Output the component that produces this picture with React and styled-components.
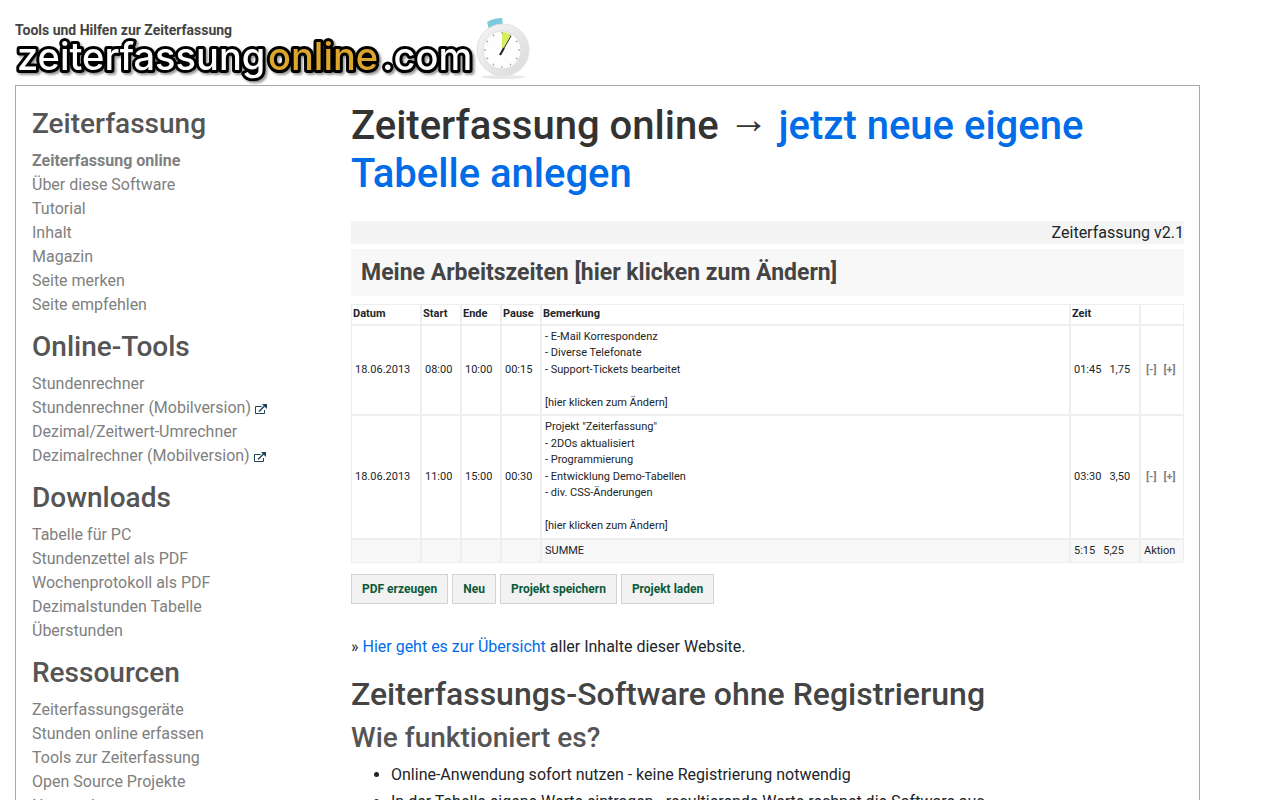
import React from 'react'
import styled, { createGlobalStyle } from 'styled-components'

const menu = [
    {
        title: 'Zeiterfassung',
        links: [
            { text: 'Zeiterfassung online', active: true },
            { text: 'Über diese Software' },
            { text: 'Tutorial' },
            { text: 'Inhalt' },
            { text: 'Magazin' },
            { text: 'Seite merken' },
            { text: 'Seite empfehlen' },
        ],
    },
    {
        title: 'Online-Tools',
        links: [
            { text: 'Stundenrechner' },
            { text: 'Stundenrechner (Mobilversion)', external: true },
            { text: 'Dezimal/Zeitwert-Umrechner' },
            { text: 'Dezimalrechner (Mobilversion)', external: true },
        ],
    },
    {
        title: 'Downloads',
        links: [
            { text: 'Tabelle für PC' },
            { text: 'Stundenzettel als PDF' },
            { text: 'Wochenprotokoll als PDF' },
            { text: 'Dezimalstunden Tabelle' },
            { text: 'Überstunden' },
        ],
    },
    {
        title: 'Ressourcen',
        links: [
            { text: 'Zeiterfassungsgeräte' },
            { text: 'Stunden online erfassen' },
            { text: 'Tools zur Zeiterfassung' },
            { text: 'Open Source Projekte' },
            { text: 'Netzwerk' },
        ],
    },
]

const rows = [
    {
        id: 1,
        date: '18.06.2013',
        start: '08:00',
        end: '10:00',
        pause: '00:15',
        note: '- E-Mail Korrespondenz\n- Diverse Telefonate\n- Support-Tickets bearbeitet\n\n[hier klicken zum Ändern]',
        time: '01:45',
        decimal: '1,75',
    },
    {
        id: 2,
        date: '18.06.2013',
        start: '11:00',
        end: '15:00',
        pause: '00:30',
        note: 'Projekt "Zeiterfassung"\n- 2DOs aktualisiert\n- Programmierung\n- Entwicklung Demo-Tabellen\n- div. CSS-Änderungen\n\n[hier klicken zum Ändern]',
        time: '03:30',
        decimal: '3,50',
    },
]

const actions = ['PDF erzeugen', 'Neu', 'Projekt speichern', 'Projekt laden']

function Logo() {
    const ticks = Array.from({ length: 12 }, (_, i) => i * 30)
    return (
        <LogoSvg width="520" height="66" viewBox="0 0 520 66" role="img" aria-label="zeiterfassungonline.com">
            <defs>
                <linearGradient id="case" x1="0" y1="0" x2="1" y2="1">
                    <stop offset="0" stopColor="#f6f6f6" />
                    <stop offset="1" stopColor="#dadada" />
                </linearGradient>
            </defs>
            <g className="word">
                <text x="2" y="55">zeiterfassung</text>
                <text x="253" y="55" className="gold">online</text>
                <text x="367" y="55">.com</text>
            </g>
            {/* stopwatch */}
            <ellipse cx="488" cy="62" rx="22" ry="2" fill="#e8e8e8" />
            <path d="M472 7 Q479 3 487 3 L488 10 L474 14 Z" fill="#7cc8dc" />
            <circle cx="488" cy="35" r="26" fill="url(#case)" stroke="#e2e2e2" />
            <circle cx="487" cy="35" r="19" fill="#fefefe" stroke="#dedede" />
            <path d="M487 35 V17 Q492 17 496 20 Z" fill="#d6ee5c" />
            {ticks.map((deg) => (
                <path key={deg} d="M487 17 v2" stroke="#999" transform={`rotate(${deg} 487 35)`} />
            ))}
            <path d="M485 40 L496 21" stroke="#222" strokeWidth="1" />
            <path d="M485 40 L489 33" stroke="#222" strokeWidth="2" />
        </LogoSvg>
    )
}

function ExternalIcon() {
    return (
        <svg width="13" height="11" viewBox="0 0 13 11" fill="none" stroke="#1f4257" aria-hidden="true">
            <path d="M6.5 2.5 H0.5 V9.5 H9.5 V6" />
            <path d="M4 7.5 L10 1.5" strokeWidth="1.4" />
            <path d="M7 0 H12 V5 Z" fill="#1f4257" stroke="none" />
        </svg>
    )
}

function Sidebar() {
    return (
        <SidebarStyled>
            {menu.map((group) => (
                <section key={group.title}>
                    <h3>{group.title}</h3>
                    <ul>
                        {group.links.map((link) => (
                            <li key={link.text}>
                                <MenuLink href="#" $active={link.active}>
                                    {link.text}
                                    {link.external && <ExternalIcon />}
                                </MenuLink>
                            </li>
                        ))}
                    </ul>
                </section>
            ))}
        </SidebarStyled>
    )
}

function TimeTable() {
    return (
        <TableStyled>
            <colgroup>
                <col width="70" />
                <col width="40" />
                <col width="40" />
                <col width="40" />
                <col />
                <col width="70" />
                <col width="44" />
            </colgroup>
            <thead>
                <tr>
                    <th>Datum</th>
                    <th>Start</th>
                    <th>Ende</th>
                    <th>Pause</th>
                    <th>Bemerkung</th>
                    <th>Zeit</th>
                    <th></th>
                </tr>
            </thead>
            <tbody>
                {rows.map((row) => (
                    <tr key={row.id}>
                        <td>{row.date}</td>
                        <td>{row.start}</td>
                        <td>{row.end}</td>
                        <td>{row.pause}</td>
                        <td>{row.note}</td>
                        <td><Times><span>{row.time}</span><span>{row.decimal}</span></Times></td>
                        <td>
                            <RowTools>
                                <button type="button" aria-label="Zeile löschen">[-]</button>
                                <button type="button" aria-label="Zeile hinzufügen">[+]</button>
                            </RowTools>
                        </td>
                    </tr>
                ))}
            </tbody>
            <tfoot>
                <tr>
                    <td></td>
                    <td></td>
                    <td></td>
                    <td></td>
                    <td>SUMME</td>
                    <td><Times><span>5:15</span><span>5,25</span></Times></td>
                    <td>Aktion</td>
                </tr>
            </tfoot>
        </TableStyled>
    )
}

function App() {
    return (
        <>
            <GlobalStyle />
            <Page>
                <Header>
                    <Tagline>Tools und Hilfen zur Zeiterfassung</Tagline>
                    <Logo />
                </Header>
                <Frame>
                    <Sidebar />
                    <Main>
                        <h1>Zeiterfassung online <Arrow>→</Arrow> <a href="#">jetzt neue eigene Tabelle anlegen</a></h1>
                        <Version>Zeiterfassung v2.1</Version>
                        <ProjectTitle>Meine Arbeitszeiten [hier klicken zum Ändern]</ProjectTitle>
                        <TimeTable />
                        <Actions>
                            {actions.map((label) => (
                                <ActionButton key={label} type="button">{label}</ActionButton>
                            ))}
                        </Actions>
                        <p>» <a href="#">Hier geht es zur Übersicht</a> aller Inhalte dieser Website.</p>
                        <h2>Zeiterfassungs-Software ohne Registrierung</h2>
                        <h3>Wie funktioniert es?</h3>
                        <ul>
                            <li>Online-Anwendung sofort nutzen - keine Registrierung notwendig</li>
                            <li>In der Tabelle eigene Werte eintragen - resultierende Werte rechnet die Software aus</li>
                        </ul>
                    </Main>
                </Frame>
            </Page>
        </>
    )
}

const GlobalStyle = createGlobalStyle`
    * {
        box-sizing: border-box;
    }
    body {
        margin: 0;
        background: #fff;
        color: #212529;
        font-family: Roboto, "Liberation Sans", sans-serif;
        font-size: 16px;
        line-height: 24px;
    }
    h1, h2, h3, p, ul {
        margin: 0;
    }
    a {
        color: #006ce8;
        text-decoration: none;
    }
`

const Page = styled.div`
    max-width: 1200px;
    padding-left: 15px;
`

const Header = styled.header`
    height: 85px;
    padding-top: 15px;
    display: grid;
`

const Tagline = styled.strong`
    grid-area: 1 / 1;
    font-size: 14px;
    line-height: 30px;
    color: #444;
`

const LogoSvg = styled.svg`
    grid-area: 1 / 1;
    overflow: visible;
    .word {
        font-family: Inter, "Liberation Sans", sans-serif;
        font-size: 38px;
        font-weight: 500;
        fill: #fff;
        stroke: #000;
        stroke-width: 6px;
        stroke-linejoin: round;
        paint-order: stroke;
        filter: drop-shadow(2px 2px 1px rgba(0, 0, 0, 0.4));
    }
    .gold {
        fill: #dca52c;
    }
`

const Frame = styled.div`
    display: grid;
    grid-template-columns: 320px minmax(0, 1fr);
    border: 1px solid #a8a8a8;
`

const SidebarStyled = styled.nav`
    padding: 21px 16px;
    display: flex;
    flex-direction: column;
    gap: 13px;
    h3 {
        margin-bottom: 8px;
        font-size: 28px;
        line-height: 34px;
        font-weight: 500;
        color: #555;
    }
    ul {
        padding: 0;
        list-style: none;
    }
`

const MenuLink = styled.a`
    color: #808080;
    font-weight: ${(props) => (props.$active ? 700 : 400)};
    svg {
        margin-left: 4px;
        vertical-align: -2px;
    }
`

const Main = styled.main`
    padding: 16px 15px;
    h1 {
        margin-bottom: 23px;
        font-size: 40px;
        line-height: 48px;
        font-weight: 500;
        color: #333;
    }
    h2 {
        margin: 16px 0 8px;
        font-size: 32px;
        line-height: 38px;
        font-weight: 500;
        color: #444;
    }
    h3 {
        margin-bottom: 8px;
        font-size: 28px;
        line-height: 34px;
        font-weight: 500;
        color: #555;
    }
    ul {
        padding-left: 40px;
    }
    li {
        margin-bottom: 3px;
    }
`

const Arrow = styled.span`
    font-family: "Liberation Serif", serif;
    font-weight: 400;
    line-height: 0;
    vertical-align: 6px;
`

const Version = styled.div`
    margin-bottom: 5px;
    background: #f4f4f4;
    text-align: right;
    line-height: 23px;
`

const ProjectTitle = styled.div`
    margin-bottom: 8px;
    padding: 0 10px;
    background: #f8f8f8;
    color: #444;
    font-size: 23px;
    line-height: 47px;
    font-weight: 700;
`

const TableStyled = styled.table`
    width: 100%;
    table-layout: fixed;
    border-collapse: separate;
    border-spacing: 0;
    font-size: 11px;
    line-height: 1.5;
    th, td {
        border: 1px solid #eee;
        text-align: left;
        white-space: pre-line;
    }
    th {
        padding: 1px;
    }
    td {
        padding: 3px;
    }
    tfoot td {
        background: #f8f8f8;
    }
`

const Times = styled.div`
    display: flex;
    gap: 8px;
`

const RowTools = styled.div`
    display: flex;
    gap: 7px;
    padding-left: 2px;
    button {
        padding: 0;
        border: 0;
        background: none;
        color: #808080;
        font: inherit;
        font-weight: 700;
        cursor: pointer;
    }
`

const Actions = styled.div`
    display: flex;
    gap: 4px;
    margin: 11px 0 31px;
`

const ActionButton = styled.button`
    height: 30px;
    padding: 0 10px;
    border: 1px solid #d3d3d3;
    background: #f2f2f2;
    color: #0b5a3c;
    font-family: inherit;
    font-size: 12px;
    font-weight: 700;
    cursor: pointer;
`

export default App
